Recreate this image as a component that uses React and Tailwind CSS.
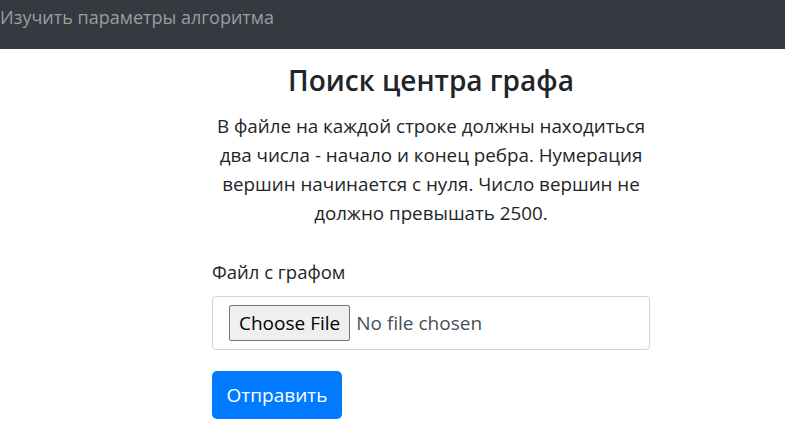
import React from 'react';

const lines = [
  'В файле на каждой строке должны находиться',
  'два числа - начало и конец ребра. Нумерация',
  'вершин начинается с нуля. Число вершин не',
  'должно превышать 2500.',
];

const App = () => {
  return (
    <div className="min-h-screen bg-white text-[#212529] font-['Open_Sans',sans-serif]">
      <nav className="h-[49px] bg-[#343a40] overflow-hidden">
        <span className="block pt-[3px] text-[18px] leading-[28px] text-[#9a9da0] whitespace-nowrap">
          Изучить параметры алгоритма
        </span>
      </nav>

      <main className="ml-[212px] w-[438px] pt-[14px]">
        <h3 className="text-center text-[28px] leading-[34px] font-semibold">Поиск центра графа</h3>
        <p className="mt-[15px] text-center text-[18.8px] leading-[29px]">
          {lines.map((l) => (
            <span key={l} className="block whitespace-nowrap">{l}</span>
          ))}
        </p>

        <form className="mt-[32px]" onSubmit={(e) => e.preventDefault()}>
          <label htmlFor="graph" className="block text-[18.5px] leading-[24px]">
            Файл с графом
          </label>
          <div className="mt-[12px] h-[54px] border border-[#ced4da] rounded-[4px] flex items-center pl-[16px]">
            <input
              id="graph"
              type="file"
              className="text-[19px] text-[#495057] file:mr-[6px] file:h-[36px] file:px-[9px] file:border file:border-[#767676] file:rounded-[2px] file:bg-[#efefef] file:text-[#000] file:text-[19px] file:font-['Open_Sans',sans-serif]"
            />
          </div>
          <button
            type="submit"
            className="mt-[21px] h-[48px] w-[130px] rounded-[5px] bg-[#007bff] text-white text-[19px]"
          >
            Отправить
          </button>
        </form>
      </main>
    </div>
  );
};

export default App;
